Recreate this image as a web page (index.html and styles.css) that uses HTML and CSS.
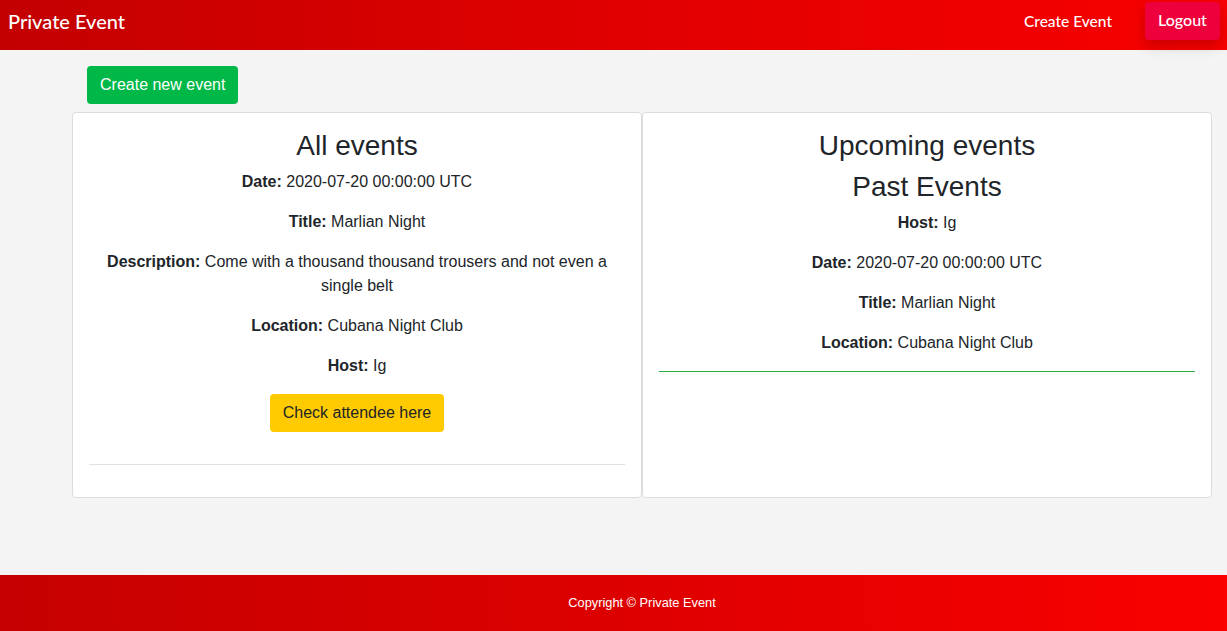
FILE: index.html
```html
<!DOCTYPE html>
<html lang="en">
<head>
<meta charset="utf-8">
<title>Private Event</title>
<link rel="stylesheet" href="styles.css">
</head>
<body>
<nav class="navbar">
  <a class="brand" href="#">Private Event</a>
  <div class="nav-right">
    <a class="nav-link" href="#">Create Event</a>
    <a class="logout" href="#">Logout</a>
  </div>
</nav>
<main class="main">
  <div class="actions">
    <a class="btn btn-green" href="#">Create new event</a>
  </div>
  <div class="cards">
    <section class="card">
      <h3>All events</h3>
      <p><b>Date:</b> 2020-07-20 00:00:00 UTC</p>
      <p><b>Title:</b> Marlian Night</p>
      <p><b>Description:</b> Come with a thousand thousand trousers and not even a single belt</p>
      <p><b>Location:</b> Cubana Night Club</p>
      <p><b>Host:</b> Ig</p>
      <p class="btn-row"><a class="btn btn-yellow" href="#">Check attendee here</a></p>
      <hr class="rule">
    </section>
    <section class="card">
      <h3>Upcoming events</h3>
      <h3>Past Events</h3>
      <p><b>Host:</b> Ig</p>
      <p><b>Date:</b> 2020-07-20 00:00:00 UTC</p>
      <p><b>Title:</b> Marlian Night</p>
      <p><b>Location:</b> Cubana Night Club</p>
      <hr class="rule rule-green">
    </section>
  </div>
</main>
<footer class="footer">
  <p>Copyright © Private Event</p>
</footer>
</body>
</html>
```
FILE: styles.css
```css
* { box-sizing: border-box; }
html, body { height: 100%; }
body {
  margin: 0;
  font-family: "Liberation Sans", Arial, sans-serif;
  font-size: 16px;
  line-height: 24px;
  color: #212529;
  background: #f4f4f4;
  display: flex;
  flex-direction: column;
  min-height: 100vh;
}
a { text-decoration: none; }

.navbar {
  height: 50px;
  display: flex;
  align-items: flex-start;
  justify-content: space-between;
  background: linear-gradient(to right, #c30000 0%, #e00000 50%, #f80000 100%);
  padding: 0 7px 0 8px;
}
.brand {
  font-family: Lato, "Open Sans", sans-serif;
  font-size: 20px;
  font-weight: 500;
  color: #fff;
  line-height: 24px;
  margin-top: 9px;
}
.nav-right {
  display: flex;
  align-items: flex-start;
}
.nav-link {
  font-family: Lato, "Open Sans", sans-serif;
  font-size: 15.5px;
  font-weight: 500;
  color: #fff;
  line-height: 20px;
  margin-top: 11px;
  margin-right: 33px;
}
.logout {
  font-family: Lato, "Open Sans", sans-serif;
  font-size: 16px;
  font-weight: 500;
  color: #fff;
  background: #ee003c;
  border-radius: 4px;
  width: 75px;
  height: 38px;
  margin-top: 2px;
  display: flex;
  align-items: center;
  justify-content: center;
  padding-bottom: 3px;
  box-shadow: 0 6px 14px rgba(0, 0, 0, 0.18);
}

.main {
  flex: 1;
  padding: 16px 15px 0 72px;
}
.actions {
  padding-left: 15px;
  margin-bottom: 8px;
}
.btn {
  display: inline-block;
  padding: 7px 13px;
  border-radius: 4px;
  font-size: 16px;
  line-height: 24px;
}
.btn-green {
  background: #00b847;
  color: #fff;
}
.btn-yellow {
  background: #ffcb00;
  color: #212529;
}
.cards {
  display: flex;
}
.card {
  flex: 1;
  background: #fff;
  border: 1px solid #dcdcdc;
  border-radius: 4px;
  padding: 16px 16px 16px;
  text-align: center;
}
.card h3 {
  margin: 0 0 7px;
  font-size: 28px;
  font-weight: 400;
  line-height: 34px;
}
.card p {
  margin: 0 0 16px;
}
.rule {
  margin: 32px 0 16px;
  border: 0;
  border-top: 1px solid #e2e2e2;
}
.rule-green {
  margin-top: 16px;
  border-top-color: #28a745;
}

.footer {
  height: 56px;
  background: linear-gradient(to right, #c50000 0%, #dd0000 50%, #fa0000 100%);
  display: flex;
  align-items: center;
  justify-content: center;
  padding-left: 57px;
}
.footer p {
  margin: 0;
  color: #fff;
  font-size: 12.8px;
  line-height: 16px;
}
```
